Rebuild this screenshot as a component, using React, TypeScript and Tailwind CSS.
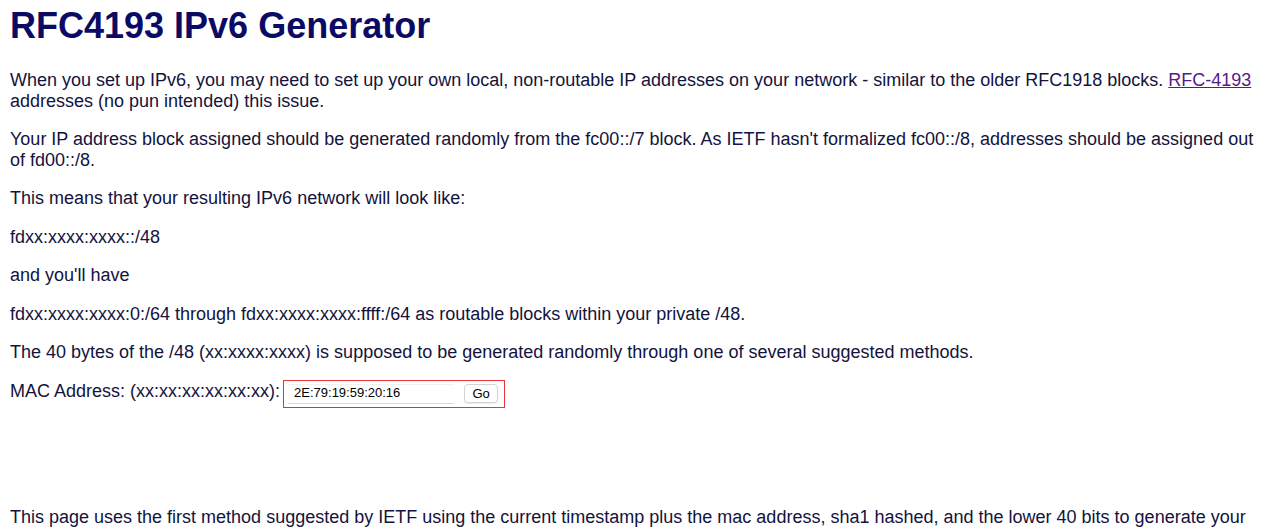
import React, { useState } from "react";

const App = () => {
  const [mac, setMac] = useState("2E:79:19:59:20:16");

  return (
    <div className="min-h-screen bg-white px-[10px] pt-[5px] font-['Liberation_Sans',Arial,sans-serif] text-[18px] leading-[20.5px] text-[#13133d]">
      {/* TITLE */}
      <h1 className="mb-[24px] text-[36px] font-bold leading-[1.15] text-[#0b0b66]">
        RFC4193 IPv6 Generator
      </h1>

      <p className="mb-[18px]">
        When you set up IPv6, you may need to set up your own local,
        non-routable IP addresses on your network - similar to the older
        RFC1918 blocks.{" "}
        <a href="#" className="text-[#551a8b] underline">
          RFC-4193
        </a>{" "}
        addresses (no pun intended) this issue.
      </p>

      <p className="mb-[18px]">
        Your IP address block assigned should be generated randomly from the
        fc00::/7 block. As IETF hasn't formalized fc00::/8, addresses should be
        assigned out of fd00::/8.
      </p>

      <p className="mb-[18px]">
        This means that your resulting IPv6 network will look like:
      </p>
      <p className="mb-[18px]">fdxx:xxxx:xxxx::/48</p>
      <p className="mb-[18px]">and you'll have</p>
      <p className="mb-[18px]">
        fdxx:xxxx:xxxx:0:/64 through fdxx:xxxx:xxxx:ffff:/64 as routable
        blocks within your private /48.
      </p>
      <p className="mb-[18px]">
        The 40 bytes of the /48 (xx:xxxx:xxxx) is supposed to be generated
        randomly through one of several suggested methods.
      </p>

      {/* MAC FORM */}
      <form
        className="flex h-[20.5px] items-center"
        onSubmit={(e) => e.preventDefault()}
      >
        <span>MAC Address: (xx:xx:xx:xx:xx:xx):</span>
        <span className="ml-[3px] mt-[5px] flex h-[28px] items-center border border-[#e8333a] pl-[4px] pr-[6px]">
          <input
            value={mac}
            onChange={(e) => setMac(e.target.value)}
            className="h-[20px] w-[166px] border-b border-[#d9d9d9] bg-white px-[6px] text-[13px] text-black outline-none shadow-[inset_0_1px_1px_rgba(0,0,0,0.06)]"
          />
          <button
            type="submit"
            className="ml-[10px] h-[19px] w-[34px] rounded-[4px] border border-[#d4d4d4] bg-white text-[13px] leading-none text-black shadow-[0_1px_1px_rgba(0,0,0,0.08)]"
          >
            Go
          </button>
        </span>
      </form>

      <div className="h-[106px]" />

      <p className="mb-[18px]">
        This page uses the first method suggested by IETF using the current
        timestamp plus the mac address, sha1 hashed, and the lower 40 bits to
        generate your random ULA.
      </p>
    </div>
  );
};

export default App;
